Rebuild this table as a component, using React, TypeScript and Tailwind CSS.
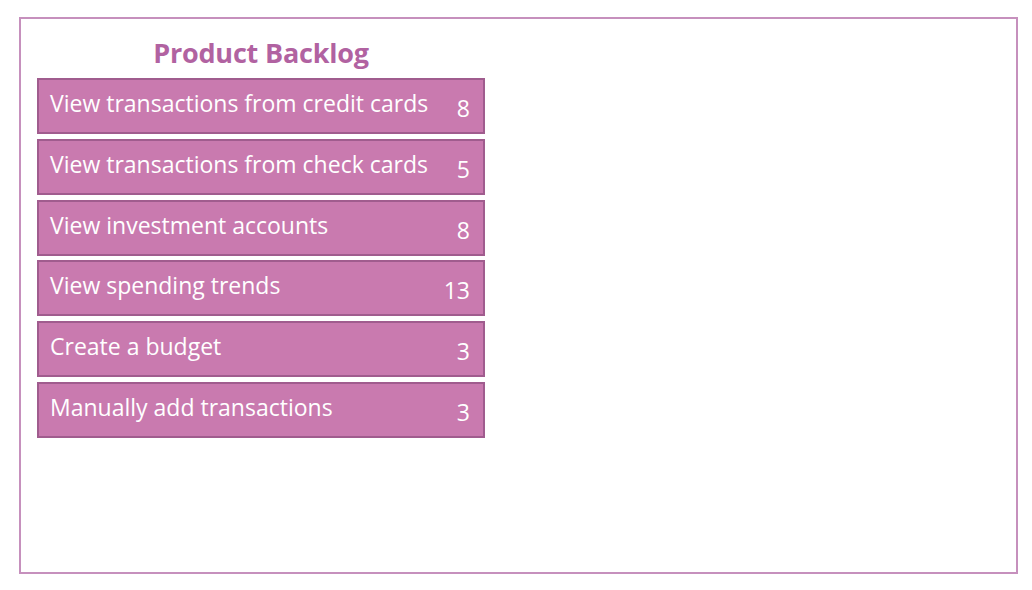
const items = [
  { title: "View transactions from credit cards", points: 8 },
  { title: "View transactions from check cards", points: 5 },
  { title: "View investment accounts", points: 8 },
  { title: "View spending trends", points: 13 },
  { title: "Create a budget", points: 3 },
  { title: "Manually add transactions", points: 3 },
];

export default function App() {
  return (
    <div className="h-[590px] w-[1032px] bg-white pl-[19px] pt-[17px] font-['Open_Sans',sans-serif]">
      <div className="h-[557px] w-[999px] border-2 border-[#c690bd] pl-[16px] pt-[17px]">
        <div className="flex w-[448px] flex-col">
          <h1 className="mb-[8px] text-center text-[27px] leading-[34px] font-bold tracking-[-0.2px] text-[#b162a1]">
            Product Backlog
          </h1>
          <ul className="flex flex-col gap-[4.8px]">
            {items.map((item) => (
              <li
                key={item.title}
                className="flex h-[56px] items-start justify-between border-2 border-[#a05c8e] bg-[#c97aaf] pl-[11px] pr-[13px] pt-[8px] text-white"
              >
                <span className="text-[23px] leading-[30px]">{item.title}</span>
                <span className="pt-[5px] text-[23px] leading-[30px]">{item.points}</span>
              </li>
            ))}
          </ul>
        </div>
      </div>
    </div>
  );
}
